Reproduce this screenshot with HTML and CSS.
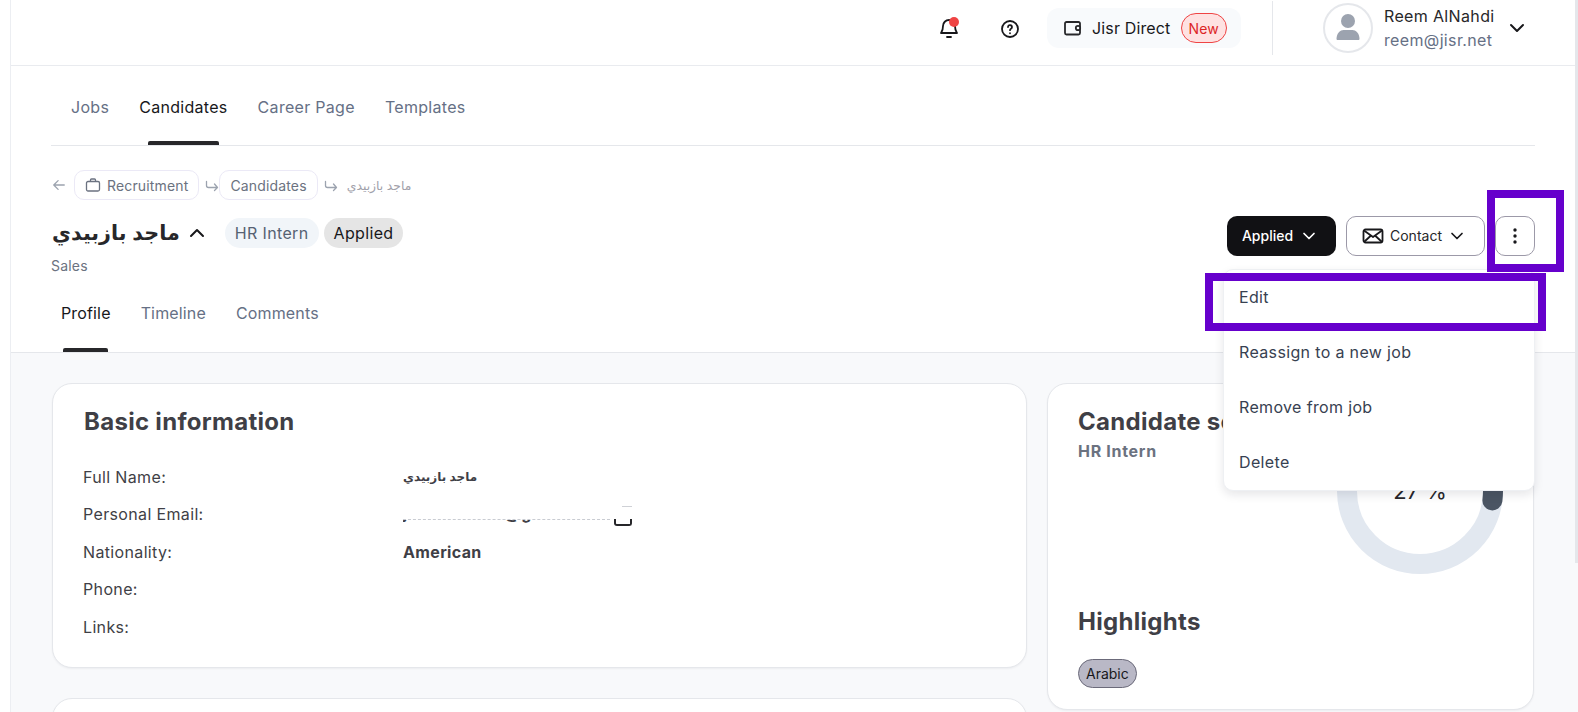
FILE: index.html
```html
<!DOCTYPE html>
<html lang="en">
<head>
<meta charset="utf-8">
<title>Candidate profile</title>
<link rel="stylesheet" href="styles.css">
</head>
<body>
<div class="app">
  <div class="rail"></div>
  <main class="main">
    <header class="topbar">
      <button class="icon-btn bell-btn" aria-label="Notifications">
        <svg width="24" height="24" viewBox="0 0 24 24" fill="none" stroke="#18181b" stroke-width="1.8" stroke-linecap="round" stroke-linejoin="round"><path d="M6 10a6 6 0 0 1 12 0c0 5 2 6.500 2 7H4c0-.5 2-2 2-7Z"/><path d="M10 21h4"/></svg>
        <span class="bell-dot"></span>
      </button>
      <button class="icon-btn help-btn" aria-label="Help">
        <svg width="24" height="24" viewBox="0 0 24 24" fill="none" stroke="#18181b" stroke-width="1.8" stroke-linecap="round" stroke-linejoin="round"><circle cx="12" cy="12" r="8"/><path d="M10 10a2 2 0 1 1 3 1.800c-.7.4-1 .8-1 1.400"/><path d="M12 16.200v.1"/></svg>
      </button>
      <div class="direct">
        <svg class="wallet" width="20" height="20" viewBox="0 0 20 20" fill="none" stroke="#27272a" stroke-width="1.800" stroke-linejoin="round"><path d="M15.500 4H3.500a1.500 1.500 0 0 0-1.500 1.500v9.500a1.500 1.500 0 0 0 1.500 1.500h12a1.500 1.500 0 0 0 1.500-1.500V5.500A1.500 1.500 0 0 0 15.500 4Z"/><circle cx="15" cy="10" r="2.200" fill="#f8fafc"/></svg>
        <span class="direct-label">Jisr Direct</span>
        <span class="new-pill">New</span>
      </div>
      <div class="vdivider"></div>
      <div class="avatar">
        <svg width="26" height="30" viewBox="0 0 26 30" fill="#9ca3af"><circle cx="13" cy="8" r="7"/><path d="M1.500 26c0-6 4-9 7-9h9c3 0 7 3 7 9 0 .5-.5 1-1 1H2.500c-.5 0-1-.5-1-1Z"/></svg>
      </div>
      <div class="user">
        <div class="user-name">Reem AlNahdi</div>
        <div class="user-mail">reem@jisr.net</div>
      </div>
      <svg class="user-chev" width="24" height="24" viewBox="0 0 24 24" fill="none" stroke="#18181b" stroke-width="2" stroke-linecap="round" stroke-linejoin="round"><path d="M6 9l6 6 6-6"/></svg>
    </header>

    <section class="head">
      <nav class="tabs main-tabs">
        <a class="tab">Jobs</a>
        <a class="tab active">Candidates</a>
        <a class="tab">Career Page</a>
        <a class="tab">Templates</a>
      </nav>

      <div class="crumbs">
        <svg class="crumb-back" width="14" height="14" viewBox="0 0 16 16" fill="none" stroke="#9ca3af" stroke-width="1.500" stroke-linecap="round" stroke-linejoin="round"><path d="M14 8H2M7 3 2 8l5 5"/></svg>
        <span class="crumb first">
          <svg width="16" height="16" viewBox="0 0 16 16" fill="none" stroke="#6b7280" stroke-width="1.300" stroke-linejoin="round"><rect x="1.500" y="4.500" width="13" height="9.500" rx="1.500"/><path d="M5.500 4.500V3a1 1 0 0 1 1-1h3a1 1 0 0 1 1 1v1.500"/></svg>
          Recruitment
        </span>
        <svg class="crumb-sep" width="14" height="14" viewBox="0 0 14 14" fill="none" stroke="#9ca3af" stroke-width="1.300" stroke-linecap="round" stroke-linejoin="round"><path d="M1.500 2.500v4a2 2 0 0 0 2 2h9M9.500 5l3 3.500-3 3"/></svg>
        <span class="crumb">Candidates</span>
        <svg class="crumb-sep wide" width="14" height="14" viewBox="0 0 14 14" fill="none" stroke="#9ca3af" stroke-width="1.300" stroke-linecap="round" stroke-linejoin="round"><path d="M1.500 2.500v4a2 2 0 0 0 2 2h9M9.500 5l3 3.500-3 3"/></svg>
        <span class="crumb-current" dir="rtl">ماجد بازبيدي</span>
      </div>

      <div class="title-row">
        <div class="title-block">
          <div class="title-line">
            <h1 class="person" dir="rtl">ماجد بازبيدي</h1>
            <svg class="person-chev" width="16" height="16" viewBox="0 0 16 16" fill="none" stroke="#18181b" stroke-width="2" stroke-linecap="round" stroke-linejoin="round"><path d="M2 11l6-6 6 6"/></svg>
            <span class="pill job">HR Intern</span>
            <span class="pill status">Applied</span>
          </div>
          <div class="dept">Sales</div>
        </div>
        <div class="actions">
          <button class="btn dark">Applied
            <svg width="16" height="16" viewBox="0 0 16 16" fill="none" stroke="#fff" stroke-width="1.700" stroke-linecap="round" stroke-linejoin="round"><path d="M3 5.500l5 5 5-5"/></svg>
          </button>
          <button class="btn outline">
            <svg width="22" height="20" viewBox="0 0 22 20" fill="none" stroke="#18181b" stroke-width="1.800" stroke-linejoin="round"><rect x="1.500" y="3.500" width="19" height="13" rx="2"/><path d="M2 4.500l9 6.500 9-6.500M2 16l7-6.500M20 16l-7-6.500"/></svg>
            Contact
            <svg class="outline-chev" width="16" height="16" viewBox="0 0 16 16" fill="none" stroke="#18181b" stroke-width="1.700" stroke-linecap="round" stroke-linejoin="round"><path d="M3 5.500l5 5 5-5"/></svg>
          </button>
          <button class="btn more" aria-label="More">
            <svg width="4" height="16" viewBox="0 0 4 16" fill="#18181b"><circle cx="2" cy="2" r="1.700"/><circle cx="2" cy="8" r="1.700"/><circle cx="2" cy="14" r="1.700"/></svg>
          </button>
        </div>
      </div>

      <nav class="tabs sub-tabs">
        <a class="tab active">Profile</a>
        <a class="tab">Timeline</a>
        <a class="tab">Comments</a>
      </nav>
    </section>

    <section class="content">
      <div class="col">
        <article class="card info-card">
          <h2 class="card-title">Basic information</h2>
          <dl class="facts">
            <dt>Full Name:</dt><dd class="ar" dir="rtl">ماجد بازبيدي</dd>
            <dt>Personal Email:</dt>
            <dd class="redacted"><span class="redacted-clip"><span class="redacted-text">jasem.r000@gmail.com</span></span></dd>
            <dt>Nationality:</dt><dd>American</dd>
            <dt>Phone:</dt><dd></dd>
            <dt>Links:</dt><dd></dd>
          </dl>
        </article>
        <article class="card stub-card"></article>
      </div>
      <div class="col">
        <article class="card score-card">
          <div class="score-top">
            <div>
              <h2 class="card-title">Candidate score</h2>
              <div class="score-job">HR Intern</div>
            </div>
            <svg class="ring" width="166" height="166" viewBox="0 0 166 166" fill="none">
              <circle cx="83" cy="83" r="73" stroke="#e2e8f0" stroke-width="20"/>
              <circle cx="83" cy="83" r="73" stroke="#4b5563" stroke-width="20" stroke-linecap="round" stroke-dasharray="124 459" transform="rotate(-90 83 83)"/>
              <text class="ring-text" x="83" y="91" text-anchor="middle">27 %</text>
            </svg>
          </div>
          <h2 class="card-title highlights">Highlights</h2>
          <span class="tag">Arabic</span>
        </article>
      </div>
    </section>
  </main>
  <div class="scrollbar"><div class="thumb"></div></div>

  <ul class="menu">
    <li>Edit</li>
    <li>Reassign to a new job</li>
    <li>Remove from job</li>
    <li>Delete</li>
  </ul>
  <div class="mark mark-more"></div>
  <div class="mark mark-edit"></div>
</div>
</body>
</html>
```
FILE: styles.css
```css
* { box-sizing: border-box; }
html, body { margin: 0; padding: 0; height: 100%; overflow: hidden; background: #fff; }
body { font-family: Inter, "Liberation Sans", "DejaVu Sans", sans-serif; font-size: 16px; letter-spacing: .35px; color: #18181b; }
button { font: inherit; letter-spacing: inherit; color: inherit; background: none; border: 0; padding: 0; cursor: pointer; }
h1, h2, dl, dd, ul { margin: 0; padding: 0; }
.facts .ar, .person, .crumb-current { font-family: "Liberation Sans", "DejaVu Sans", sans-serif; letter-spacing: 0; }

.app { position: relative; display: flex; width: 1578px; height: 712px; overflow: hidden; }
.rail { flex: 0 0 11px; border-right: 1px solid #eceef2; background: #fff; }
.main { flex: 1 1 auto; min-width: 0; display: flex; flex-direction: column; }
.scrollbar { flex: 0 0 3px; background: #f8f9fb; }
.thumb { height: 563px; background: #e5e7eb; }

/* top bar */
.topbar { flex: none; height: 66px; display: flex; align-items: center; padding: 0 46px 10px 0; justify-content: flex-end; border-bottom: 1px solid #e9ebef; }
.icon-btn { position: relative; display: flex; align-items: center; justify-content: center; width: 24px; height: 24px; }
.bell-btn { margin-top: 1px; }
.help-btn { margin: 3px 25px 0 37px; }
.bell-dot { position: absolute; top: 1px; right: 2px; width: 10px; height: 10px; border-radius: 50%; background: #ef4444; }
.direct { display: flex; align-items: center; height: 40px; width: 194px; margin-top: 1px; padding: 0 15px 0 16px; background: #f8fafc; border-radius: 12px; }
.wallet { flex: none; }
.direct-label { margin-left: 9px; white-space: nowrap; letter-spacing: .15px; }
.new-pill { display: flex; align-items: center; height: 30px; margin-left: 10px; padding: 0 7px; border: 1px solid #ef4444; border-radius: 15px; background: #fee2e2; color: #dc2626; font-size: 14px; letter-spacing: .1px; }
.vdivider { width: 1px; height: 54px; margin: 0 50px 0 31px; background: #e5e7eb; }
.avatar { display: flex; align-items: flex-end; justify-content: center; width: 50px; height: 50px; margin-top: 1px; padding-bottom: 8px; border: 2px solid #e5e7eb; border-radius: 50%; background: #fff; }
.user { width: 121px; margin: 0 0 0 11px; }
.user-name { line-height: 24px; color: #27272a; white-space: nowrap; }
.user-mail { line-height: 24px; color: #667085; white-space: nowrap; }
.user-chev { flex: none; }

/* page head */
.head { flex: none; padding: 0 40px; border-bottom: 1px solid #e5e7eb; }
.tabs { display: flex; gap: 30px; }
.tab { position: relative; display: flex; align-items: center; color: #667085; font-size: 16px; letter-spacing: .3px; white-space: nowrap; }
.tab.active { color: #18181b; }
.tab.active::after { content: ""; position: absolute; bottom: 0; height: 4px; border-radius: 2px 2px 0 0; background: #27272a; }
.main-tabs { height: 80px; padding-left: 20px; border-bottom: 1px solid #e5e7eb; }
.main-tabs .tab { padding-top: 3px; height: 79px; }
.main-tabs .tab.active::after { left: 9px; right: 9px; }
.sub-tabs { height: 76px; padding-left: 10px; }
.sub-tabs .tab { padding-bottom: 2px; letter-spacing: .15px; }
.sub-tabs .tab.active::after { left: 2px; right: 3px; }

.crumbs { display: flex; align-items: center; height: 30px; margin-top: 24px; color: #6b7280; font-size: 14px; letter-spacing: .15px; }
.crumb-back { margin: 0 8px 0 1px; }
.crumb { display: flex; align-items: center; gap: 6px; height: 30px; padding: 0 10px; border: 1px solid #ebe9f6; border-radius: 10px; white-space: nowrap; }
.crumb-sep { margin: 2px 0 0 6px; }
.crumb-sep.wide { margin: 2px 9px 0 6px; }
.crumb-current { font-size: 12.4px; color: #a1a1aa; }

.title-row { display: flex; justify-content: space-between; align-items: flex-start; height: 60px; margin-top: 16px; }
.title-line { display: flex; align-items: center; height: 30px; margin-top: 2px; }
.person { font-size: 20.7px; line-height: 30px; font-weight: 700; color: #27272a; margin-left: 1px; white-space: nowrap; }
.person-chev { margin: 0 20px 0 9px; }
.pill { display: flex; align-items: center; height: 30px; padding: 0 10px; border-radius: 15px; white-space: nowrap; }
.job { background: #f1f5f9; color: #566273; margin-right: 5px; }
.status { background: #e5e5e5; color: #18181b; }
.dept { margin-top: 8px; font-size: 14px; line-height: 20px; letter-spacing: .2px; color: #6b7280; }

.actions { display: flex; gap: 10px; }
.btn { display: flex; align-items: center; justify-content: center; height: 40px; padding-bottom: 1px; border-radius: 10px; font-size: 14px; letter-spacing: 0; }
.dark { width: 109px; gap: 8px; padding-right: 4px; background: #111114; color: #fff; font-weight: 500; }
.outline { width: 139px; gap: 6px; padding-left: 15px; justify-content: flex-start; border: 1px solid #9c99a8; color: #27272a; }
.outline-chev { margin-left: 1px; }
.more { width: 40px; border: 1px solid #9c99a8; }

/* content */
.content { flex: 1 1 auto; min-height: 0; display: grid; grid-template-columns: 975px 487px; gap: 20px; padding: 30px 0 0 41px; background: #f8f9fb; }
.col { display: flex; flex-direction: column; gap: 30px; }
.card { background: #fff; border: 1px solid #e5e7eb; border-radius: 20px; box-shadow: 0 1px 2px rgba(16, 24, 40, .05); }
.card-title { font-size: 24px; line-height: 32px; font-weight: 700; color: #3f3f46; letter-spacing: .3px; white-space: nowrap; }
.info-card { flex: none; height: 285px; padding: 22px 30px 0; }
.info-card .card-title { margin-left: 1px; }
.stub-card { flex: none; height: 120px; }
.facts { display: grid; grid-template-columns: 320px 1fr; grid-auto-rows: 37.5px; align-items: center; margin-top: 20px; color: #3f3f46; }
.facts dd { font-weight: 700; }
.facts .ar { font-size: 12px; justify-self: start; }
.redacted { position: relative; align-self: start; height: 37px; width: 229px; }
.redacted::before { content: ""; position: absolute; right: 0; top: 10px; width: 10px; height: 1px; background: #cfd1d6; }
.redacted::after { content: ""; position: absolute; right: 0; top: 23px; width: 14px; height: 5px; border: 2px solid #27272a; border-top: 0; border-radius: 0 0 3px 3px; background: #fff; }
.redacted-clip { position: absolute; left: 0; right: 22px; top: 23px; height: 6px; overflow: hidden; display: block; border-top: 1px dashed #c9ccd2; }
.redacted-text { display: block; margin-top: -7px; line-height: 0; white-space: nowrap; letter-spacing: 1px; color: #3f3f46; }

.score-card { flex: none; height: 327px; padding: 22px 30px 0; }
.score-top { display: flex; justify-content: space-between; }
.score-job { margin-top: 1px; font-weight: 700; line-height: 24px; letter-spacing: .7px; color: #6b7280; }
.ring { flex: none; margin-top: 2px; }
.ring-text { font: 400 22px Inter, "Liberation Sans", sans-serif; letter-spacing: 0; fill: #27272a; }
.highlights { margin-top: 32px; }
.tag { display: inline-flex; align-items: center; height: 29px; margin-top: 21px; padding: 0 7px; border: 1px solid #6b6a7a; border-radius: 15px; background: #b9b8c6; font-size: 14px; letter-spacing: 0; color: #18181b; }

/* overlays */
.menu { position: absolute; left: 1223px; top: 269px; width: 312px; list-style: none; background: #fff; border: 1px solid #eef0f3; border-radius: 10px; box-shadow: 0 4px 10px rgba(16, 24, 40, .1); z-index: 2; }
.menu li { display: flex; align-items: center; height: 55px; padding: 0 15px 2px; color: #374151; }
.mark { position: absolute; border: 8px solid #6600cc; z-index: 3; }
.mark-more { left: 1487px; top: 190px; width: 77px; height: 82px; }
.mark-edit { left: 1205px; top: 273px; width: 341px; height: 58px; }
```
